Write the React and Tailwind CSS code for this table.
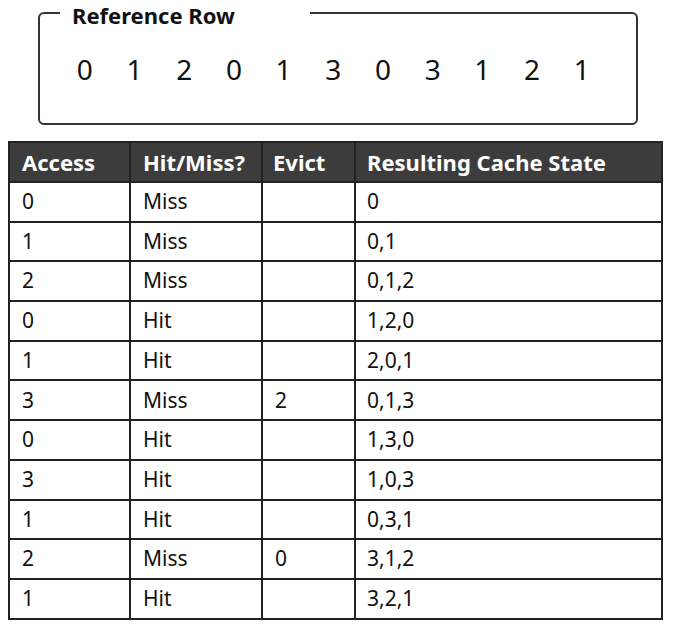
const sequence = [0, 1, 2, 0, 1, 3, 0, 3, 1, 2, 1];

const rows = [
    { access: "0", result: "Miss", evict: "", state: "0" },
    { access: "1", result: "Miss", evict: "", state: "0,1" },
    { access: "2", result: "Miss", evict: "", state: "0,1,2" },
    { access: "0", result: "Hit", evict: "", state: "1,2,0" },
    { access: "1", result: "Hit", evict: "", state: "2,0,1" },
    { access: "3", result: "Miss", evict: "2", state: "0,1,3" },
    { access: "0", result: "Hit", evict: "", state: "1,3,0" },
    { access: "3", result: "Hit", evict: "", state: "1,0,3" },
    { access: "1", result: "Hit", evict: "", state: "0,3,1" },
    { access: "2", result: "Miss", evict: "0", state: "3,1,2" },
    { access: "1", result: "Hit", evict: "", state: "3,2,1" },
];

export default function App() {
    return (
        <div className="w-[676px] h-[626px] bg-white text-[#111] font-['Noto_Sans','Open_Sans',sans-serif]">
            <fieldset className="ml-[38px] w-[600px] h-[125px] border-2 border-[#333] rounded-md">
                <legend className="ml-[20px] w-[250px] pl-3 pt-1 text-[22px] leading-[22px] font-bold">
                    Reference Row
                </legend>
                <div className="flex pl-[20px] pt-[26px] text-[28px] leading-[34px]">
                    {sequence.map((n, i) => (
                        <span key={i} className="w-[49.7px] text-center">
                            {n}
                        </span>
                    ))}
                </div>
            </fieldset>

            <table className="mt-[16px] ml-[8px] w-[655px] border-collapse border-2 border-[#222] table-fixed">
                <colgroup>
                    <col className="w-[121px]" />
                    <col className="w-[132px]" />
                    <col className="w-[93px]" />
                    <col />
                </colgroup>
                <thead>
                    <tr className="h-[40px] bg-[#3c3c3c] text-white text-[22px] font-bold text-left">
                        <th className="pl-[12px] border-2 border-[#222]">Access</th>
                        <th className="pl-[12px] border-2 border-[#222]">Hit/Miss?</th>
                        <th className="pl-[10px] border-2 border-[#222]">Evict</th>
                        <th className="pl-[11px] border-2 border-[#222]">Resulting Cache State</th>
                    </tr>
                </thead>
                <tbody className="text-[21px]">
                    {rows.map((r, i) => (
                        <tr key={i} className="h-[39.7px]">
                            <td className="pl-[12px] border-2 border-[#222]">{r.access}</td>
                            <td className="pl-[12px] border-2 border-[#222]">{r.result}</td>
                            <td className="pl-[12px] border-2 border-[#222]">{r.evict}</td>
                            <td className="pl-[11px] border-2 border-[#222]">{r.state}</td>
                        </tr>
                    ))}
                </tbody>
            </table>
        </div>
    );
}
